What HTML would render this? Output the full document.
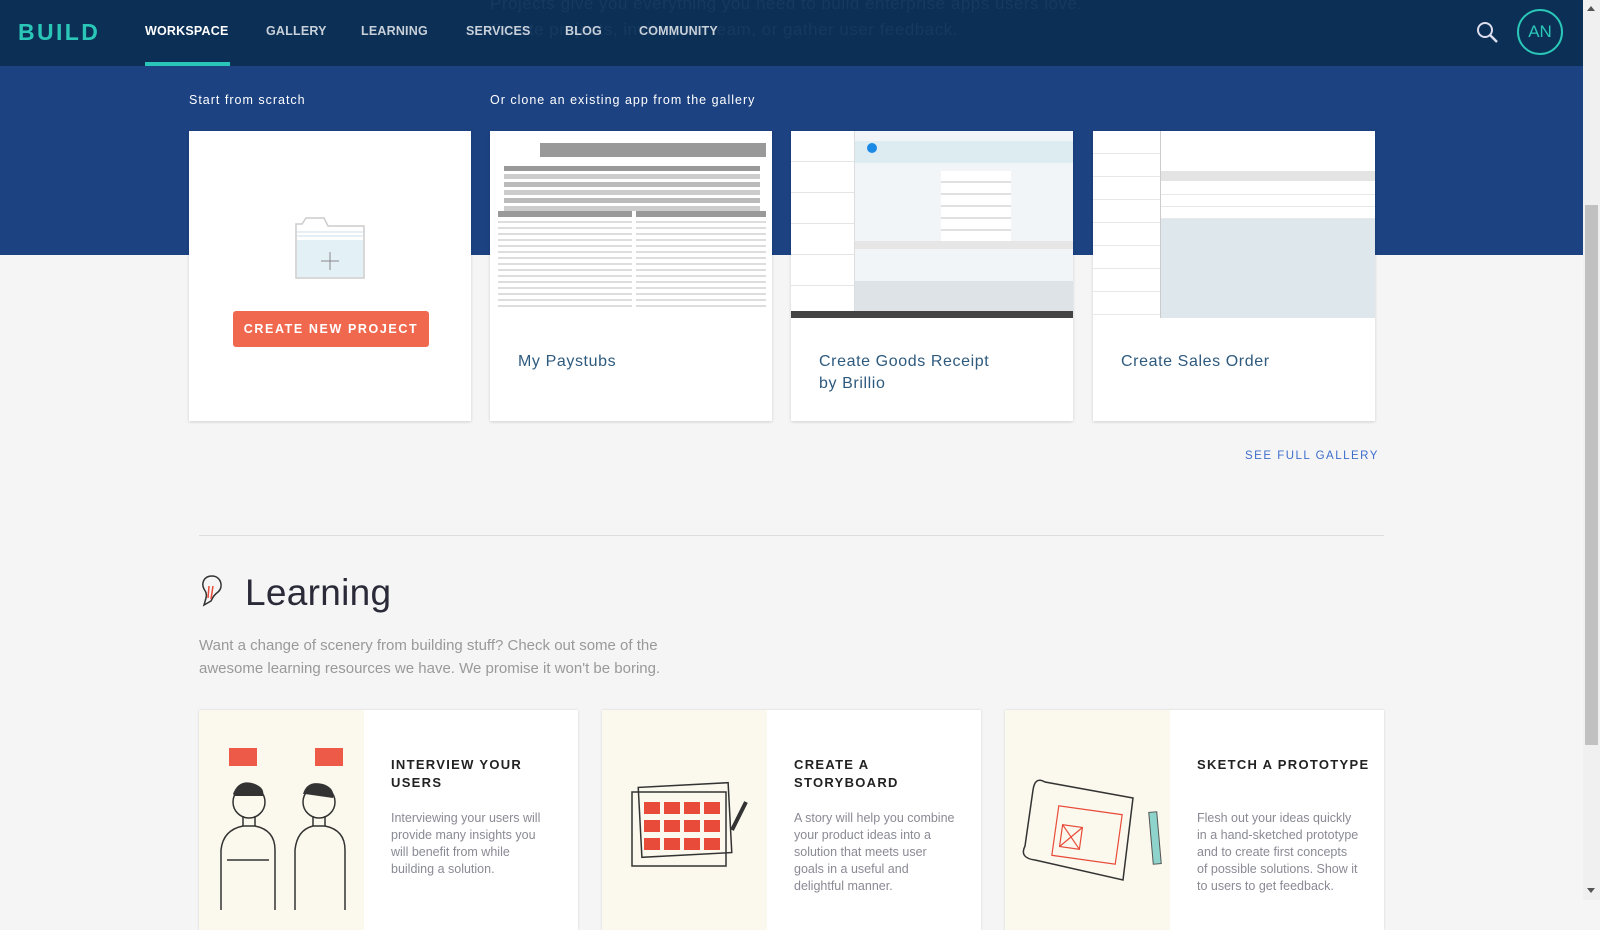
<!DOCTYPE html>
<html><head><meta charset="utf-8"><style>
*{box-sizing:border-box;margin:0;padding:0}
body{width:1600px;height:900px;overflow:hidden;background:#f5f5f5;font-family:"Liberation Sans",sans-serif;position:relative}
.nav{position:absolute;left:0;top:0;width:1583px;height:66px;background:#0b2f55}
.band{position:absolute;left:0;top:66px;width:1583px;height:189px;background:#1c4282}
.logo{position:absolute;left:18px;top:19px;color:#2ac7b8;font-size:23px;font-weight:bold;letter-spacing:2.4px}
.ni{position:absolute;top:24px;color:#c8d0da;font-size:12.5px;font-weight:bold;letter-spacing:.2px}
.ghost{position:absolute;left:490px;color:#17395f;font-size:17px;letter-spacing:.5px;white-space:nowrap}
.lbl{position:absolute;top:93px;color:#fff;font-size:12.5px;letter-spacing:1px}
.card{position:absolute;top:131px;width:282px;height:290px;background:#fff;box-shadow:0 1px 3px rgba(0,0,0,.15)}
.shot{position:absolute;left:0;top:0;width:282px;height:187px;background:#fff;overflow:hidden}
.ct{position:absolute;left:28px;top:220px;color:#2e5a7e;font-size:16px;letter-spacing:.6px;line-height:22px}
.btn{position:absolute;left:44px;top:180px;width:196px;height:36px;background:#f0694f;border-radius:3px;color:#fff;font-size:12.5px;font-weight:bold;letter-spacing:1.6px;text-align:center;line-height:36px}
.lc{position:absolute;top:710px;width:379px;height:220px;background:#fff;box-shadow:0 0 2px rgba(0,0,0,.15)}
.ill{position:absolute;left:0;top:0;width:165px;height:220px;background:#fbf9ed}
.lt{position:absolute;left:192px;top:46px;font-size:13px;font-weight:bold;letter-spacing:1.3px;color:#222;line-height:18px}
.lb{position:absolute;left:192px;top:100px;width:162px;font-size:12.5px;color:#8a8a95;line-height:17px}
.bar{background:#999;height:5px;margin:3px 6px}
</style></head><body>
<div class="nav">
<div class="ghost" style="top:-6px">Projects give you everything you need to build enterprise apps users love.</div>
<div class="ghost" style="top:20px">Create projects, invite your team, or gather user feedback.</div>
<div class="logo">BUILD</div>
<div class="ni" style="left:145px;color:#fff">WORKSPACE</div>
<div style="position:absolute;left:145px;top:62px;width:85px;height:4px;background:#2ac7b8"></div>
<div class="ni" style="left:266px">GALLERY</div>
<div class="ni" style="left:361px">LEARNING</div>
<div class="ni" style="left:466px">SERVICES</div>
<div class="ni" style="left:565px">BLOG</div>
<div class="ni" style="left:639px">COMMUNITY</div>
<svg style="position:absolute;left:1476px;top:21px" width="24" height="24" viewBox="0 0 24 24"><circle cx="9" cy="9" r="7" fill="none" stroke="#dde" stroke-width="2"/><line x1="14" y1="14" x2="21" y2="21" stroke="#dde" stroke-width="2.5"/></svg>
<div style="position:absolute;left:1517px;top:9px;width:46px;height:46px;border:2px solid #2ac7b8;border-radius:50%;color:#2ac7b8;font-size:17px;text-align:center;line-height:42px">AN</div>
</div>
<div class="band"></div>
<div class="lbl" style="left:189px">Start from scratch</div>
<div class="lbl" style="left:490px">Or clone an existing app from the gallery</div>

<div class="card" style="left:189px">
<svg style="position:absolute;left:105px;top:83px" width="72" height="66" viewBox="0 0 72 66"><path d="M2 10 V64 H70 V12 H34 L30 4 H12 L8 10 Z" fill="#fff" stroke="#ccc" stroke-width="1.5"/><rect x="3" y="26" width="66" height="37" fill="#e3f1f6"/><line x1="3" y1="18" x2="69" y2="18" stroke="#cde" /><line x1="3" y1="22" x2="69" y2="22" stroke="#cde"/><line x1="36" y1="38" x2="36" y2="56" stroke="#888"/><line x1="27" y1="47" x2="45" y2="47" stroke="#888"/></svg>
<div class="btn">CREATE NEW PROJECT</div>
</div>

<div class="card" style="left:490px"><div class="shot">
<div style="position:absolute;left:50px;top:12px;width:226px;height:14px;background:#999"></div>
<div style="position:absolute;left:8px;top:32px;width:268px">
<div class="bar"></div><div class="bar" style="background:#ccc"></div><div class="bar" style="background:#bbb"></div><div class="bar" style="background:#ccc"></div><div class="bar" style="background:#bbb"></div><div class="bar" style="background:#ccc"></div></div>
<div style="position:absolute;left:8px;top:80px;width:134px;height:100px;border-top:6px solid #999;background:repeating-linear-gradient(#fff 0 4px,#ddd 4px 6px)"></div>
<div style="position:absolute;left:146px;top:80px;width:130px;height:100px;border-top:6px solid #999;background:repeating-linear-gradient(#fff 0 4px,#ddd 4px 6px)"></div>
</div><div class="ct">My Paystubs</div></div>

<div class="card" style="left:791px"><div class="shot" style="background:#f2f5f7">
<div style="position:absolute;left:0;top:0;width:64px;height:187px;background:#fff;border-right:1px solid #ddd;background:repeating-linear-gradient(#fff 0 30px,#e5e5e5 30px 31px)"></div>
<div style="position:absolute;left:64px;top:10px;width:218px;height:22px;background:#dcecf1"></div>
<div style="position:absolute;left:76px;top:12px;width:10px;height:10px;border-radius:50%;background:#1a8ae6"></div>
<div style="position:absolute;left:150px;top:40px;width:70px;height:70px;background:repeating-linear-gradient(#fff 0 10px,#e0e0e0 10px 12px)"></div>
<div style="position:absolute;left:64px;top:110px;width:218px;height:8px;background:#e6e6e6"></div>
<div style="position:absolute;left:64px;top:150px;width:218px;height:30px;background:#dde3e7"></div>
<div style="position:absolute;left:0;top:180px;width:282px;height:7px;background:#444"></div>
</div><div class="ct">Create Goods Receipt<br>by Brillio</div></div>

<div class="card" style="left:1093px"><div class="shot" style="background:#dde7ec">
<div style="position:absolute;left:0;top:0;width:282px;height:60px;background:#fff"></div>
<div style="position:absolute;left:0;top:0;width:68px;height:187px;background:repeating-linear-gradient(#fff 0 22px,#e8e8e8 22px 23px);border-right:1px solid #ccc"></div>
<div style="position:absolute;left:68px;top:40px;width:214px;height:10px;background:#e4e4e4"></div>
<div style="position:absolute;left:68px;top:52px;width:214px;height:36px;background:repeating-linear-gradient(#fff 0 11px,#e8e8e8 11px 12px)"></div>
</div><div class="ct">Create Sales Order</div></div>

<div style="position:absolute;left:1245px;top:450px;color:#3e6ecc;font-size:11.5px;letter-spacing:1.5px">SEE FULL GALLERY</div>
<div style="position:absolute;left:199px;top:535px;width:1185px;height:1px;background:#ddd"></div>

<svg style="position:absolute;left:199px;top:574px" width="26" height="34" viewBox="0 0 26 34"><path d="M13 2 C5 2 2 9 5 15 C7 18 8 20 7 24 L5 31 L12 27 C14 23 15 21 19 18 C25 13 22 2 13 2Z" fill="none" stroke="#333" stroke-width="1.5"/><path d="M10 12 L9 24 M14 12 L12 25" stroke="#e84b3a" stroke-width="1.5"/></svg>
<div style="position:absolute;left:245px;top:572px;font-size:37px;color:#2a2a38;letter-spacing:.3px">Learning</div>
<div style="position:absolute;left:199px;top:635px;font-size:15px;color:#999;line-height:22.5px">Want a change of scenery from building stuff? Check out some of the<br>awesome learning resources we have. We promise it won't be boring.</div>

<div class="lc" style="left:199px"><div class="ill">
<svg width="165" height="200" viewBox="0 0 165 200"><rect x="30" y="38" width="28" height="18" fill="#ee5a48"/><rect x="116" y="38" width="28" height="18" fill="#ee5a48"/>
<g fill="none" stroke="#333" stroke-width="1.5"><circle cx="50" cy="92" r="16"/><path d="M44 106 V116 H56 V106"/><path d="M22 200 V140 Q24 120 44 116 M56 116 Q76 120 76 140 V200"/><circle cx="120" cy="92" r="16"/><path d="M114 106 V116 H126 V106"/><path d="M96 200 V140 Q98 120 114 116 M126 116 Q146 120 146 140 V200"/><line x1="28" y1="150" x2="70" y2="150"/></g>
<path d="M34 84 Q40 68 56 74 Q66 78 64 86 L36 86Z M104 84 Q108 70 124 74 Q136 78 134 88 L106 84Z" fill="#333"/></svg></div>
<div class="lt">INTERVIEW YOUR<br>USERS</div><div class="lb">Interviewing your users will provide many insights you will benefit from while building a solution.</div></div>

<div class="lc" style="left:602px"><div class="ill">
<svg width="165" height="200" viewBox="0 0 165 200"><g fill="none" stroke="#333" stroke-width="1.5"><rect x="38" y="75" width="90" height="70" transform="rotate(-3 83 110)"/><rect x="30" y="82" width="94" height="74"/></g>
<g fill="#e84b3a"><rect x="42" y="92" width="16" height="12"/><rect x="62" y="92" width="16" height="12"/><rect x="82" y="92" width="16" height="12"/><rect x="102" y="92" width="16" height="12"/><rect x="42" y="110" width="16" height="12"/><rect x="62" y="110" width="16" height="12"/><rect x="82" y="110" width="16" height="12"/><rect x="102" y="110" width="16" height="12"/><rect x="42" y="128" width="16" height="12"/><rect x="62" y="128" width="16" height="12"/><rect x="82" y="128" width="16" height="12"/><rect x="102" y="128" width="16" height="12"/></g>
<path d="M130 120 L144 92" stroke="#333" stroke-width="4"/></svg></div>
<div class="lt">CREATE A<br>STORYBOARD</div><div class="lb">A story will help you combine your product ideas into a solution that meets user goals in a useful and delightful manner.</div></div>

<div class="lc" style="left:1005px"><div class="ill">
<svg width="165" height="200" viewBox="0 0 165 200"><g fill="none" stroke="#333" stroke-width="1.5"><path d="M28 80 Q30 66 40 72 L128 88 L118 170 L30 150 Q14 148 20 136Z"/></g>
<g fill="none" stroke="#e84b3a" stroke-width="1.2"><rect x="50" y="100" width="64" height="50" transform="rotate(8 82 125)"/><rect x="56" y="116" width="20" height="22" transform="rotate(8 66 127)"/><path d="M56 116 L76 138 M76 116 L56 138" transform="rotate(8 66 127)"/></g>
<rect x="146" y="102" width="8" height="52" fill="#8fd4cc" stroke="#555" transform="rotate(-5 150 128)"/></svg></div>
<div class="lt">SKETCH A PROTOTYPE</div><div class="lb">Flesh out your ideas quickly in a hand-sketched prototype and to create first concepts of possible solutions. Show it to users to get feedback.</div></div>

<div style="position:absolute;left:1583px;top:0;width:17px;height:900px;background:#f0f0f0"></div>
<div style="position:absolute;left:1585px;top:205px;width:13px;height:540px;background:#c1c1c1"></div>
<div style="position:absolute;left:1587px;top:6px;border:4px solid transparent;border-bottom:5px solid #555;border-top:0"></div>
<div style="position:absolute;left:1587px;top:888px;border:4px solid transparent;border-top:5px solid #555;border-bottom:0"></div>
</body></html>
